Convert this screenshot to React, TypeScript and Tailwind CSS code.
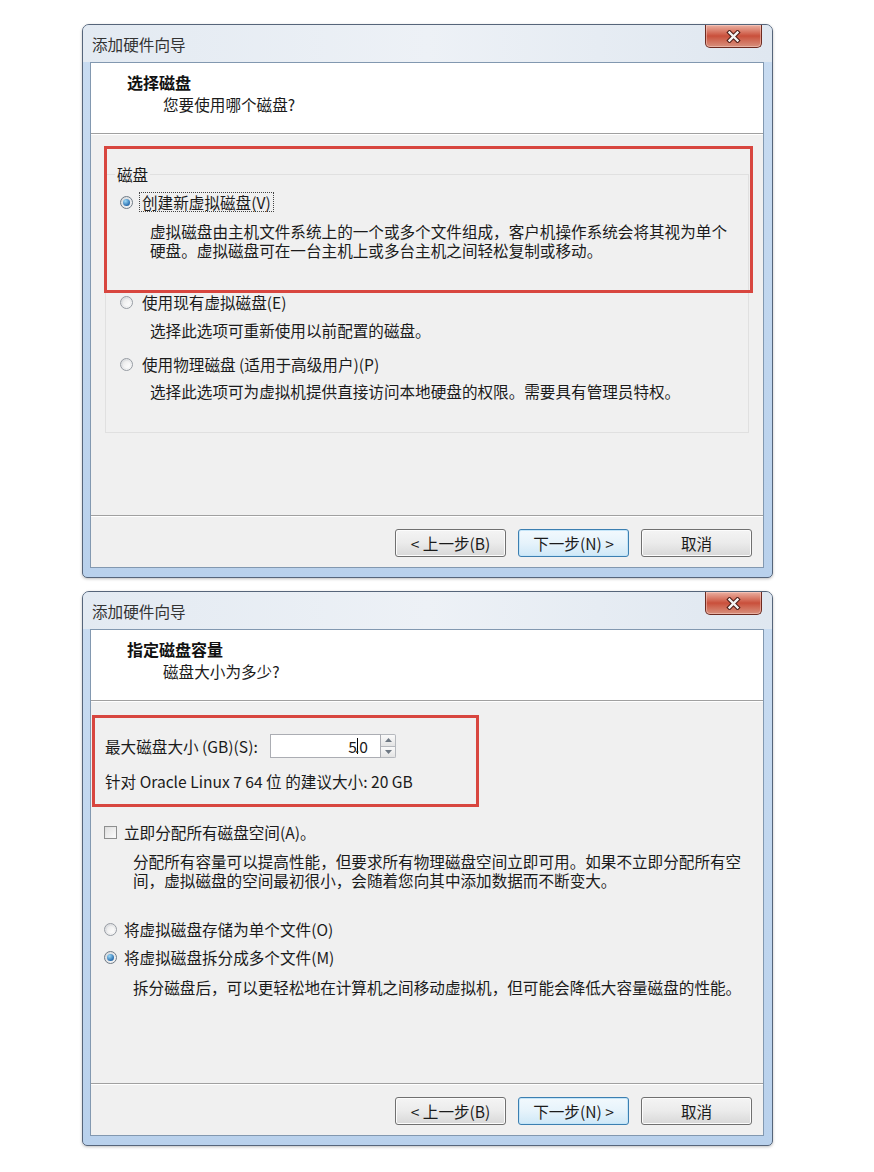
import clsx from "clsx";
import type { ReactNode } from "react";

function CloseButton() {
  return (
    <div className="mr-[10px] flex h-[23px] w-[57px] items-center justify-center rounded-b-[5px] border border-t-0 border-[#6d2b21] bg-linear-to-b from-[#eab0a2] via-[#c94f3b] to-[#d7907d] shadow-[inset_0_0_0_1px_rgba(255,220,210,0.45)]">
      <svg width="15" height="13" viewBox="0 0 15 13">
        <path d="M3.5 2.5 L11.5 10.5 M11.5 2.5 L3.5 10.5" stroke="#4a1a14" strokeWidth="4.4" strokeLinecap="square" />
        <path d="M3.5 2.5 L11.5 10.5 M11.5 2.5 L3.5 10.5" stroke="#f4f4f4" strokeWidth="2.4" strokeLinecap="square" />
      </svg>
    </div>
  );
}

function Radio({ checked }: { checked?: boolean }) {
  return (
    <span
      className={clsx(
        "flex h-[13px] w-[13px] shrink-0 items-center justify-center rounded-full border bg-linear-to-br",
        checked ? "border-[#6f7a85] from-[#d4d8dc] to-[#f8f8f8]" : "border-[#979ca3] from-[#d6d8db] to-[#fbfbfb]"
      )}
    >
      {checked ? (
        <span className="h-[7px] w-[7px] rounded-full bg-[radial-gradient(circle_at_35%_30%,#9cdaf8,#2a6fb0_70%,#1b4f86)]" />
      ) : (
        <span className="h-[7px] w-[7px] rounded-full bg-linear-to-br from-[#e9e9e9] to-[#ffffff]" />
      )}
    </span>
  );
}

function Checkbox() {
  return (
    <span className="flex h-[13px] w-[13px] shrink-0 items-center justify-center border border-[#8e8f8f] bg-linear-to-br from-[#dcdcdc] to-[#fbfbfb]">
      <span className="h-[9px] w-[9px] bg-linear-to-br from-[#e2e2e2] to-[#fafafa]" />
    </span>
  );
}

function Btn({ children, focused }: { children: ReactNode; focused?: boolean }) {
  return (
    <button
      type="button"
      className={clsx(
        "flex h-[28px] w-[111px] items-center justify-center rounded-[3px] border text-[15.6px] leading-[19px] text-[#1b1b1b]",
        focused
          ? "border-[#3c7fb1] bg-linear-to-b from-[#f2f9fd] via-[#e6f3fb] to-[#cfe8f7] shadow-[inset_0_0_0_1px_#c4e5f8]"
          : "border-[#707070] bg-linear-to-b from-[#f4f4f4] via-[#ebebeb] to-[#d8d8d8] shadow-[inset_0_0_0_1px_#fcfcfc]"
      )}
    >
      {children}
    </button>
  );
}

function WizardWindow({
  heading,
  sub,
  height,
  children,
}: {
  heading: string;
  sub: string;
  height: string;
  children: ReactNode;
}) {
  return (
    <div
      className={clsx(
        "flex w-[691px] flex-col rounded-t-[7px] rounded-b-[5px] border border-[#56657a] bg-linear-to-b from-[#c9dcf1] to-[#b9d1ec] shadow-[0_1px_3px_rgba(0,0,0,0.25)]",
        height
      )}
    >
      <div className="flex h-[37px] shrink-0 items-start justify-between rounded-t-[6px] bg-linear-to-r from-[#e3eaf2] via-[#edf1f6] to-[#dfe7f0]">
        <span className="pl-[9px] pt-[10px] text-[15.6px] leading-[19px] text-[#333]">添加硬件向导</span>
        <CloseButton />
      </div>
      <div className="mx-[7px] mb-[9px] mr-[8px] flex flex-1 flex-col border border-[#8298b0] bg-[#f0f0f0]">
        <div className="h-[71px] shrink-0 border-b border-[#a0a0a0] bg-white pl-[36px] pt-[10px]">
          <div className="text-[16px] font-bold leading-[19px] text-[#111]">{heading}</div>
          <div className="mt-[3px] pl-[36px] leading-[19px] text-[#1b1b1b]">{sub}</div>
        </div>
        <div className="relative flex-1 border-t border-white">{children}</div>
        <div className="flex h-[52px] shrink-0 justify-end gap-[12px] border-t border-[#a0a0a0] pr-[11px] pt-[13px] shadow-[inset_0_1px_0_#ffffff]">
          <Btn>&lt; 上一步(B)</Btn>
          <Btn focused>下一步(N) &gt;</Btn>
          <Btn>取消</Btn>
        </div>
      </div>
    </div>
  );
}

export default function App() {
  return (
    <div className="flex min-h-[1172px] flex-col gap-[13px] bg-white pl-[82px] pt-[24px] font-[family-name:'Noto_Sans_CJK_SC','Noto_Sans',sans-serif] text-[15.6px] leading-[19px] text-[#1b1b1b]">
      <WizardWindow heading="选择磁盘" sub="您要使用哪个磁盘?" height="h-[554px]">
        <fieldset className="mx-[14px] mt-[30px] min-w-0 border border-[#e0e0e0] pb-[31px] pl-[9px]">
          <legend className="px-[2px] leading-[19px]">磁盘</legend>
          <div className="pl-[5px]">
            <div className="mt-[8px] flex items-center">
              <Radio checked />
              <span className="ml-[6px] border border-dotted border-[#444] px-[2px] leading-[18px]">创建新虚拟磁盘(V)</span>
            </div>
            <p className="mt-[10px] pl-[30px]">
              虚拟磁盘由主机文件系统上的一个或多个文件组成，客户机操作系统会将其视为单个
              <br />
              硬盘。虚拟磁盘可在一台主机上或多台主机之间轻松复制或移动。
            </p>
            <div className="mt-[33px] flex items-center">
              <Radio />
              <span className="ml-[9px]">使用现有虚拟磁盘(E)</span>
            </div>
            <div className="mt-[9px] pl-[30px]">选择此选项可重新使用以前配置的磁盘。</div>
            <div className="mt-[15px] flex items-center">
              <Radio />
              <span className="ml-[9px]">使用物理磁盘 (适用于高级用户)(P)</span>
            </div>
            <div className="mt-[8px] pl-[30px]">选择此选项可为虚拟机提供直接访问本地硬盘的权限。需要具有管理员特权。</div>
          </div>
        </fieldset>
        <div className="pointer-events-none absolute left-[13px] top-[11px] h-[147px] w-[649px] border-[3px] border-[#d8463f]" />
      </WizardWindow>

      <WizardWindow heading="指定磁盘容量" sub="磁盘大小为多少?" height="h-[555px]">
        <div className="pl-[14px]">
          <div className="mt-[32px] flex h-[24px] items-center">
            <span className="w-[165px]">最大磁盘大小 (GB)(S):</span>
            <div className="flex h-[24px] w-[111px] items-center justify-end border border-[#abadb3] bg-white pr-[12px]">
              <span>5</span>
              <span className="-mr-[3px] inline-block h-[16px] w-px bg-black" />
              <span>.0</span>
            </div>
            <div className="flex h-[24px] w-[15px] flex-col">
              <div className="flex flex-1 items-center justify-center rounded-tr-[2px] border border-l-0 border-[#b5b8bd] bg-linear-to-b from-[#fafafa] to-[#e4e4e4]">
                <svg width="7" height="4" viewBox="0 0 7 4"><path d="M0 4 L3.5 0 L7 4 Z" fill="#6e7883" /></svg>
              </div>
              <div className="flex flex-1 items-center justify-center rounded-br-[2px] border border-l-0 border-t-0 border-[#b5b8bd] bg-linear-to-b from-[#fafafa] to-[#e4e4e4]">
                <svg width="7" height="4" viewBox="0 0 7 4"><path d="M0 0 L7 0 L3.5 4 Z" fill="#6e7883" /></svg>
              </div>
            </div>
          </div>
          <div className="mt-[14px]">针对 Oracle Linux 7 64 位 的建议大小: 20 GB</div>
        </div>
        <div className="pl-[13px]">
          <div className="mt-[32px] flex items-center">
            <Checkbox />
            <span className="ml-[7px]">立即分配所有磁盘空间(A)。</span>
          </div>
          <p className="mt-[10px] pl-[29px]">
            分配所有容量可以提高性能，但要求所有物理磁盘空间立即可用。如果不立即分配所有空
            <br />
            间，虚拟磁盘的空间最初很小，会随着您向其中添加数据而不断变大。
          </p>
          <div className="mt-[30px] flex items-center">
            <Radio />
            <span className="ml-[7px]">将虚拟磁盘存储为单个文件(O)</span>
          </div>
          <div className="mt-[9px] flex items-center">
            <Radio checked />
            <span className="ml-[7px]">将虚拟磁盘拆分成多个文件(M)</span>
          </div>
          <div className="mt-[11px] pl-[29px]">拆分磁盘后，可以更轻松地在计算机之间移动虚拟机，但可能会降低大容量磁盘的性能。</div>
        </div>
        <div className="pointer-events-none absolute left-[1px] top-[13px] h-[92px] w-[387px] border-[3px] border-[#d8463f]" />
      </WizardWindow>
    </div>
  );
}
